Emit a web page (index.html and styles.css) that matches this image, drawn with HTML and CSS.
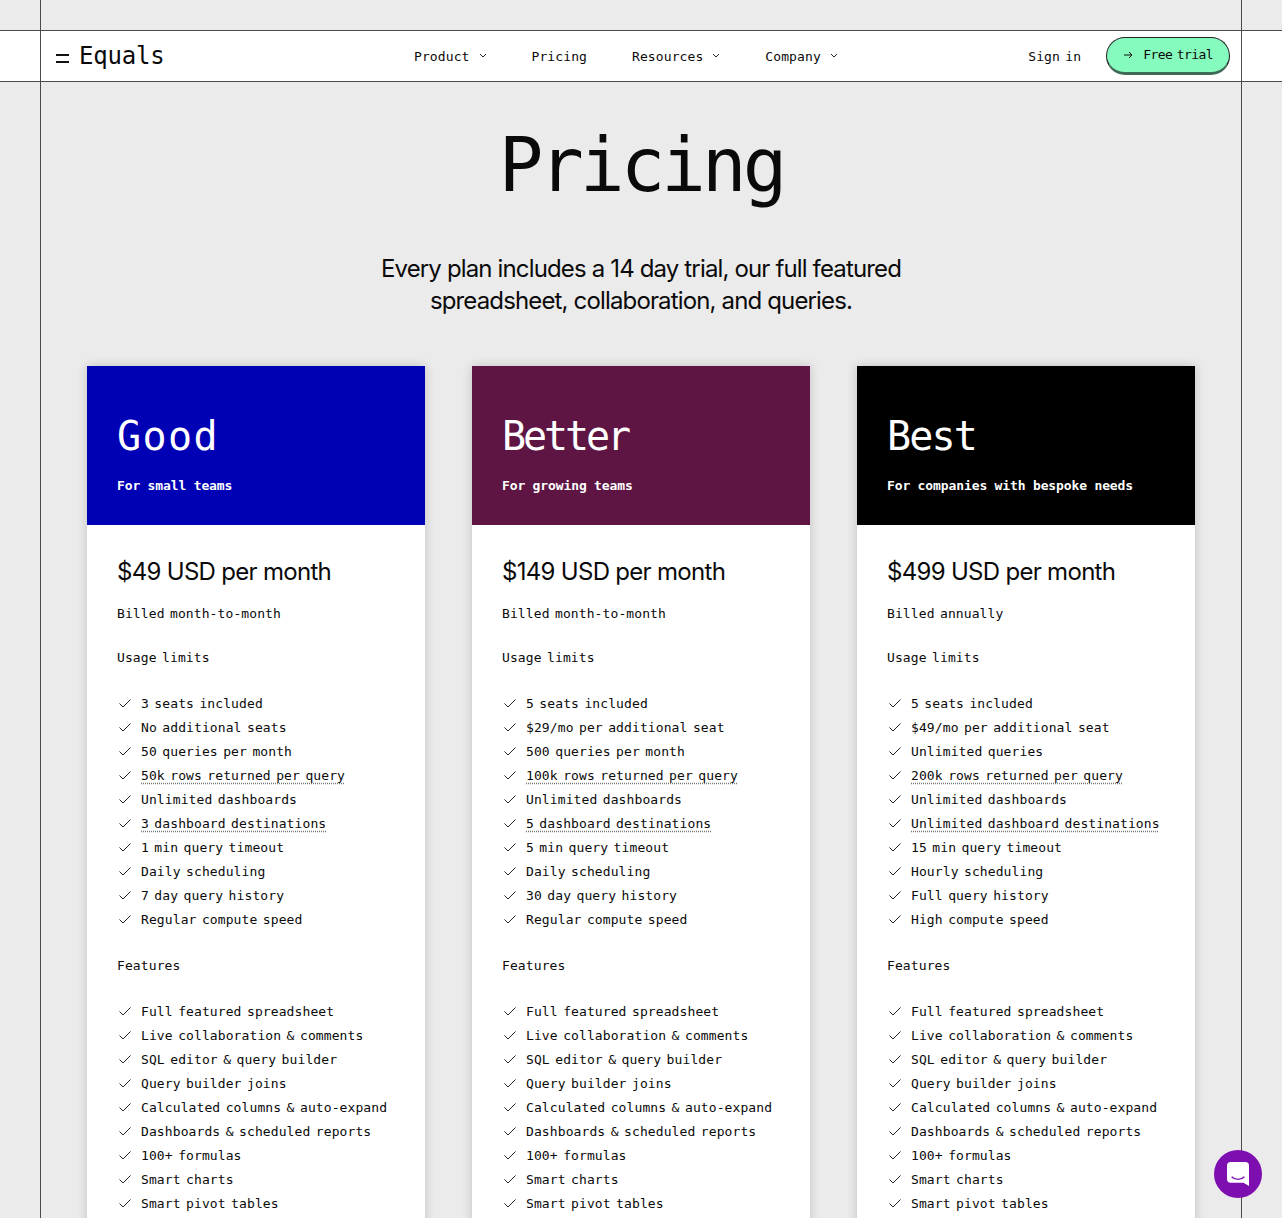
FILE: index.html
```html
<!doctype html>
<html lang="en">

<head>
	<meta charset="UTF-8">
	<title>Pricing | Equals</title>
	<link rel="stylesheet" href="styles.css">
</head>

<body>
	<div class="page">
		<header class="topbar">
			<a class="logo" href="#">
				<span class="logo-mark"></span>
				<span class="logo-text">Equals</span>
			</a>
			<nav class="nav">
				<a href="#">Product <svg class="chev" viewBox="0 0 8 5"><path d="M1 1l3 3 3-3" /></svg></a>
				<a href="#">Pricing</a>
				<a href="#">Resources <svg class="chev" viewBox="0 0 8 5"><path d="M1 1l3 3 3-3" /></svg></a>
				<a href="#">Company <svg class="chev" viewBox="0 0 8 5"><path d="M1 1l3 3 3-3" /></svg></a>
			</nav>
			<div class="actions">
				<a class="signin" href="#">Sign in</a>
				<a class="trial" href="#">
					<svg class="arrow" viewBox="0 0 10 8"><path d="M1 4h8M6 1l3 3-3 3" /></svg>
					Free trial
				</a>
			</div>
		</header>

		<main class="main">
			<h1 class="title">Pricing</h1>
			<p class="lead">Every plan includes a 14 day trial, our full featured<br>spreadsheet, collaboration, and queries.</p>

			<div class="plans">
				<section class="plan">
					<div class="plan-head good">
						<h2>Good</h2>
						<p>For small teams</p>
					</div>
					<div class="plan-body">
						<h3 class="price">$49 USD per month</h3>
						<p class="label">Billed month-to-month</p>
						<p class="label">Usage limits</p>
						<ul class="checks">
							<li><svg viewBox="0 0 16 16"><path d="M2.5 8.5l3.5 3.5 7.5-7.5" /></svg>3 seats included</li>
							<li><svg viewBox="0 0 16 16"><path d="M2.5 8.5l3.5 3.5 7.5-7.5" /></svg>No additional seats</li>
							<li><svg viewBox="0 0 16 16"><path d="M2.5 8.5l3.5 3.5 7.5-7.5" /></svg>50 queries per month</li>
							<li><svg viewBox="0 0 16 16"><path d="M2.5 8.5l3.5 3.5 7.5-7.5" /></svg><span class="hint">50k rows returned per query</span></li>
							<li><svg viewBox="0 0 16 16"><path d="M2.5 8.5l3.5 3.5 7.5-7.5" /></svg>Unlimited dashboards</li>
							<li><svg viewBox="0 0 16 16"><path d="M2.5 8.5l3.5 3.5 7.5-7.5" /></svg><span class="hint">3 dashboard destinations</span></li>
							<li><svg viewBox="0 0 16 16"><path d="M2.5 8.5l3.5 3.5 7.5-7.5" /></svg>1 min query timeout</li>
							<li><svg viewBox="0 0 16 16"><path d="M2.5 8.5l3.5 3.5 7.5-7.5" /></svg>Daily scheduling</li>
							<li><svg viewBox="0 0 16 16"><path d="M2.5 8.5l3.5 3.5 7.5-7.5" /></svg>7 day query history</li>
							<li><svg viewBox="0 0 16 16"><path d="M2.5 8.5l3.5 3.5 7.5-7.5" /></svg>Regular compute speed</li>
						</ul>
						<p class="label">Features</p>
						<ul class="checks">
							<li><svg viewBox="0 0 16 16"><path d="M2.5 8.5l3.5 3.5 7.5-7.5" /></svg>Full featured spreadsheet</li>
							<li><svg viewBox="0 0 16 16"><path d="M2.5 8.5l3.5 3.5 7.5-7.5" /></svg>Live collaboration &amp; comments</li>
							<li><svg viewBox="0 0 16 16"><path d="M2.5 8.5l3.5 3.5 7.5-7.5" /></svg>SQL editor &amp; query builder</li>
							<li><svg viewBox="0 0 16 16"><path d="M2.5 8.5l3.5 3.5 7.5-7.5" /></svg>Query builder joins</li>
							<li><svg viewBox="0 0 16 16"><path d="M2.5 8.5l3.5 3.5 7.5-7.5" /></svg>Calculated columns &amp; auto-expand</li>
							<li><svg viewBox="0 0 16 16"><path d="M2.5 8.5l3.5 3.5 7.5-7.5" /></svg>Dashboards &amp; scheduled reports</li>
							<li><svg viewBox="0 0 16 16"><path d="M2.5 8.5l3.5 3.5 7.5-7.5" /></svg>100+ formulas</li>
							<li><svg viewBox="0 0 16 16"><path d="M2.5 8.5l3.5 3.5 7.5-7.5" /></svg>Smart charts</li>
							<li><svg viewBox="0 0 16 16"><path d="M2.5 8.5l3.5 3.5 7.5-7.5" /></svg>Smart pivot tables</li>
						</ul>
					</div>
				</section>

				<section class="plan">
					<div class="plan-head better">
						<h2>Better</h2>
						<p>For growing teams</p>
					</div>
					<div class="plan-body">
						<h3 class="price">$149 USD per month</h3>
						<p class="label">Billed month-to-month</p>
						<p class="label">Usage limits</p>
						<ul class="checks">
							<li><svg viewBox="0 0 16 16"><path d="M2.5 8.5l3.5 3.5 7.5-7.5" /></svg>5 seats included</li>
							<li><svg viewBox="0 0 16 16"><path d="M2.5 8.5l3.5 3.5 7.5-7.5" /></svg>$29/mo per additional seat</li>
							<li><svg viewBox="0 0 16 16"><path d="M2.5 8.5l3.5 3.5 7.5-7.5" /></svg>500 queries per month</li>
							<li><svg viewBox="0 0 16 16"><path d="M2.5 8.5l3.5 3.5 7.5-7.5" /></svg><span class="hint">100k rows returned per query</span></li>
							<li><svg viewBox="0 0 16 16"><path d="M2.5 8.5l3.5 3.5 7.5-7.5" /></svg>Unlimited dashboards</li>
							<li><svg viewBox="0 0 16 16"><path d="M2.5 8.5l3.5 3.5 7.5-7.5" /></svg><span class="hint">5 dashboard destinations</span></li>
							<li><svg viewBox="0 0 16 16"><path d="M2.5 8.5l3.5 3.5 7.5-7.5" /></svg>5 min query timeout</li>
							<li><svg viewBox="0 0 16 16"><path d="M2.5 8.5l3.5 3.5 7.5-7.5" /></svg>Daily scheduling</li>
							<li><svg viewBox="0 0 16 16"><path d="M2.5 8.5l3.5 3.5 7.5-7.5" /></svg>30 day query history</li>
							<li><svg viewBox="0 0 16 16"><path d="M2.5 8.5l3.5 3.5 7.5-7.5" /></svg>Regular compute speed</li>
						</ul>
						<p class="label">Features</p>
						<ul class="checks">
							<li><svg viewBox="0 0 16 16"><path d="M2.5 8.5l3.5 3.5 7.5-7.5" /></svg>Full featured spreadsheet</li>
							<li><svg viewBox="0 0 16 16"><path d="M2.5 8.5l3.5 3.5 7.5-7.5" /></svg>Live collaboration &amp; comments</li>
							<li><svg viewBox="0 0 16 16"><path d="M2.5 8.5l3.5 3.5 7.5-7.5" /></svg>SQL editor &amp; query builder</li>
							<li><svg viewBox="0 0 16 16"><path d="M2.5 8.5l3.5 3.5 7.5-7.5" /></svg>Query builder joins</li>
							<li><svg viewBox="0 0 16 16"><path d="M2.5 8.5l3.5 3.5 7.5-7.5" /></svg>Calculated columns &amp; auto-expand</li>
							<li><svg viewBox="0 0 16 16"><path d="M2.5 8.5l3.5 3.5 7.5-7.5" /></svg>Dashboards &amp; scheduled reports</li>
							<li><svg viewBox="0 0 16 16"><path d="M2.5 8.5l3.5 3.5 7.5-7.5" /></svg>100+ formulas</li>
							<li><svg viewBox="0 0 16 16"><path d="M2.5 8.5l3.5 3.5 7.5-7.5" /></svg>Smart charts</li>
							<li><svg viewBox="0 0 16 16"><path d="M2.5 8.5l3.5 3.5 7.5-7.5" /></svg>Smart pivot tables</li>
						</ul>
					</div>
				</section>

				<section class="plan">
					<div class="plan-head best">
						<h2>Best</h2>
						<p>For companies with bespoke needs</p>
					</div>
					<div class="plan-body">
						<h3 class="price">$499 USD per month</h3>
						<p class="label">Billed annually</p>
						<p class="label">Usage limits</p>
						<ul class="checks">
							<li><svg viewBox="0 0 16 16"><path d="M2.5 8.5l3.5 3.5 7.5-7.5" /></svg>5 seats included</li>
							<li><svg viewBox="0 0 16 16"><path d="M2.5 8.5l3.5 3.5 7.5-7.5" /></svg>$49/mo per additional seat</li>
							<li><svg viewBox="0 0 16 16"><path d="M2.5 8.5l3.5 3.5 7.5-7.5" /></svg>Unlimited queries</li>
							<li><svg viewBox="0 0 16 16"><path d="M2.5 8.5l3.5 3.5 7.5-7.5" /></svg><span class="hint">200k rows returned per query</span></li>
							<li><svg viewBox="0 0 16 16"><path d="M2.5 8.5l3.5 3.5 7.5-7.5" /></svg>Unlimited dashboards</li>
							<li><svg viewBox="0 0 16 16"><path d="M2.5 8.5l3.5 3.5 7.5-7.5" /></svg><span class="hint">Unlimited dashboard destinations</span></li>
							<li><svg viewBox="0 0 16 16"><path d="M2.5 8.5l3.5 3.5 7.5-7.5" /></svg>15 min query timeout</li>
							<li><svg viewBox="0 0 16 16"><path d="M2.5 8.5l3.5 3.5 7.5-7.5" /></svg>Hourly scheduling</li>
							<li><svg viewBox="0 0 16 16"><path d="M2.5 8.5l3.5 3.5 7.5-7.5" /></svg>Full query history</li>
							<li><svg viewBox="0 0 16 16"><path d="M2.5 8.5l3.5 3.5 7.5-7.5" /></svg>High compute speed</li>
						</ul>
						<p class="label">Features</p>
						<ul class="checks">
							<li><svg viewBox="0 0 16 16"><path d="M2.5 8.5l3.5 3.5 7.5-7.5" /></svg>Full featured spreadsheet</li>
							<li><svg viewBox="0 0 16 16"><path d="M2.5 8.5l3.5 3.5 7.5-7.5" /></svg>Live collaboration &amp; comments</li>
							<li><svg viewBox="0 0 16 16"><path d="M2.5 8.5l3.5 3.5 7.5-7.5" /></svg>SQL editor &amp; query builder</li>
							<li><svg viewBox="0 0 16 16"><path d="M2.5 8.5l3.5 3.5 7.5-7.5" /></svg>Query builder joins</li>
							<li><svg viewBox="0 0 16 16"><path d="M2.5 8.5l3.5 3.5 7.5-7.5" /></svg>Calculated columns &amp; auto-expand</li>
							<li><svg viewBox="0 0 16 16"><path d="M2.5 8.5l3.5 3.5 7.5-7.5" /></svg>Dashboards &amp; scheduled reports</li>
							<li><svg viewBox="0 0 16 16"><path d="M2.5 8.5l3.5 3.5 7.5-7.5" /></svg>100+ formulas</li>
							<li><svg viewBox="0 0 16 16"><path d="M2.5 8.5l3.5 3.5 7.5-7.5" /></svg>Smart charts</li>
							<li><svg viewBox="0 0 16 16"><path d="M2.5 8.5l3.5 3.5 7.5-7.5" /></svg>Smart pivot tables</li>
						</ul>
					</div>
				</section>
			</div>
		</main>

		<div class="rules"></div>

		<a class="chat" href="#">
			<svg viewBox="0 0 24 26">
				<path class="bubble" d="M4 0h16a4 4 0 0 1 4 4v22l-6-3.5H4a4 4 0 0 1-4-4V4a4 4 0 0 1 4-4z" />
				<path class="smile" d="M5 16c2 2 4.5 2.8 7 2.8s5-.8 7-2.800" />
			</svg>
		</a>
	</div>
</body>

</html>
```

FILE: styles.css
```css
* {
	padding: 0;
	margin: 0;
	box-sizing: border-box;
}

html,
body {
	height: 100%;
	overflow: hidden;
}

body {
	background: #ebebeb;
	color: #0a0a0a;
	font-family: 'DejaVu Sans Mono', 'Liberation Mono', monospace;
	font-size: 13px;
	letter-spacing: 0.1px;
	word-spacing: -2.5px;
}

a {
	color: inherit;
	text-decoration: none;
}

ul {
	list-style: none;
}

.page {
	position: relative;
	height: 1218px;
	padding-top: 30px;
	overflow: hidden;
}

/* vertical page rules, drawn over the top bar */
.rules {
	position: absolute;
	top: 0;
	bottom: 0;
	left: 40px;
	width: 1202px;
	border-left: 1px solid #4a4a4a;
	border-right: 1px solid #4a4a4a;
	pointer-events: none;
}

.topbar {
	display: flex;
	align-items: center;
	height: 52px;
	padding: 0 52px 0 56px;
	background: #fff;
	border-top: 1px solid #4a4a4a;
	border-bottom: 1px solid #4a4a4a;
}

.logo {
	display: flex;
	align-items: center;
	gap: 10px;
	width: 358px;
}

.logo-mark {
	width: 13px;
	height: 9px;
	margin-top: 5px;
	border-top: 2px solid #111;
	border-bottom: 2px solid #111;
}

.logo-text {
	font-size: 24px;
	letter-spacing: -0.2px;
}

.nav {
	display: flex;
	align-items: center;
	gap: 45px;
}

.nav a {
	display: flex;
	align-items: center;
	gap: 9px;
}

.chev {
	width: 8px;
	height: 5px;
	margin-top: -2px;
	fill: none;
	stroke: #222;
	stroke-width: 1;
}

.actions {
	display: flex;
	align-items: center;
	gap: 25px;
	margin-left: auto;
}

.trial {
	display: flex;
	align-items: center;
	gap: 10px;
	height: 38px;
	padding: 0 16px 1px 16px;
	background: #86fbbe;
	border: 1px solid #222;
	border-bottom: 3px solid #3d6b54;
	border-radius: 19px;
	letter-spacing: -0.6px;
}

.arrow {
	width: 10px;
	height: 8px;
	fill: none;
	stroke: #111;
	stroke-width: 1;
}

.main {
	padding: 33px 87px 0;
}

.title {
	font-size: 74px;
	font-weight: 400;
	line-height: 100px;
	letter-spacing: -3.9px;
	word-spacing: 0;
	text-align: center;
}

.lead {
	margin-top: 38px;
	font-family: Inter, 'Liberation Sans', sans-serif;
	font-size: 24px;
	line-height: 32px;
	letter-spacing: -0.85px;
	word-spacing: 0;
	text-align: center;
}

.plans {
	display: grid;
	grid-template-columns: repeat(3, 338px);
	gap: 47px;
	margin-top: 49px;
}

.plan {
	background: #fff;
	box-shadow: 0 0 10px rgba(0, 0, 0, .18);
}

.plan-head {
	height: 159px;
	padding: 46px 30px 0;
	color: #fff;
}

.good {
	background: #0000b5;
}

.better {
	background: #5e1543;
}

.best {
	background: #000;
}

.plan-head h2 {
	font-size: 40px;
	font-weight: 400;
	line-height: 48px;
}

.good h2 {
	letter-spacing: 1.4px;
}

.better h2 {
	letter-spacing: -3.1px;
}

.best h2 {
	letter-spacing: -1.8px;
}

.plan-head p {
	margin-top: 16px;
	font-weight: 700;
	line-height: 20px;
	letter-spacing: -0.1px;
	word-spacing: -0.3px;
}

.plan-body {
	padding: 30px 30px 40px;
}

.price {
	margin-bottom: 15px;
	padding-top: 1px;
	font-family: Inter, 'Liberation Sans', sans-serif;
	font-size: 24px;
	font-weight: 400;
	line-height: 32px;
	letter-spacing: -0.7px;
	word-spacing: 0;
}

.label {
	margin-bottom: 22px;
	line-height: 22px;
}

.checks {
	margin-bottom: 24px;
}

.checks li {
	display: flex;
	align-items: center;
	gap: 8px;
	height: 24px;
}

.checks svg {
	flex: none;
	width: 16px;
	height: 16px;
	fill: none;
	stroke: #222;
	stroke-width: 1;
}

.hint {
	text-decoration: underline dotted #777;
	text-underline-offset: 3px;
}

.chat {
	position: absolute;
	left: 1214px;
	top: 1150px;
	display: flex;
	align-items: center;
	justify-content: center;
	width: 48px;
	height: 48px;
	background: #7d0eb0;
	border-radius: 50%;
}

.chat svg {
	width: 22px;
	height: 24px;
}

.bubble {
	fill: #fff;
}

.smile {
	fill: none;
	stroke: #7d0eb0;
	stroke-width: 1.5;
}
```
